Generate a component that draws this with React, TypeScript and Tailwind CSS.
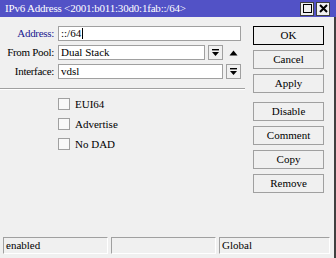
import React from "react";

function DropIcon() {
  return (
    <svg width="9" height="9" viewBox="0 0 9 9">
      <rect x="1" y="1" width="7" height="1.4" fill="#000" />
      <polygon points="1,4 8,4 4.5,8" fill="#000" />
    </svg>
  );
}

function DropBtn() {
  return (
    <div className="w-[15px] h-[15px] border border-[#a0a0a0] bg-[#f0f0f0] flex items-center justify-center">
      <DropIcon />
    </div>
  );
}

function Check({ label }: { label: string }) {
  return (
    <div className="flex items-center h-[12px]">
      <div className="w-[12px] h-[12px] border border-[#a0a0a0] bg-[#f8f8f8]" />
      <span className="ml-[5px] text-[11px] leading-none text-black">{label}</span>
    </div>
  );
}

function Btn({ label, def }: { label: string; def?: boolean }) {
  return (
    <div
      className={
        "w-[71px] h-[19px] flex items-center justify-center text-[11px] text-black bg-[#f0f0f0] " +
        (def ? "border border-black" : "border border-[#a0a0a0]")
      }
    >
      {label}
    </div>
  );
}

export default function App() {
  return (
    <div
      className="w-[336px] h-[258px] bg-[#f0f0f0] flex flex-col overflow-hidden relative"
      style={{ fontFamily: "'Liberation Serif', 'DejaVu Serif', serif" }}
    >
      {/* Title bar */}
      <div className="h-[17px] bg-[#5252c6] flex items-center justify-between pl-[5px] pr-[6px] shrink-0">
        <span className="text-white text-[11px] leading-none tracking-[-0.2px]">
          IPv6 Address &lt;2001:b011:30d0:1fab::/64&gt;
        </span>
        <div className="flex gap-[2px]">
          <div className="w-[14px] h-[14px] bg-[#f0f0f0] border border-[#404040] flex items-center justify-center">
            <div className="w-[9px] h-[9px] border-[1.5px] border-black" />
          </div>
          <div className="w-[14px] h-[14px] bg-[#f0f0f0] border border-[#404040] flex items-center justify-center">
            <svg width="9" height="9" viewBox="0 0 9 9">
              <path d="M1 1 L8 8 M8 1 L1 8" stroke="#000" strokeWidth="2" />
            </svg>
          </div>
        </div>
      </div>

      {/* Body */}
      <div className="flex flex-1 border-r-2 border-[#404040]">
        <div className="w-[253px] flex flex-col pt-[9px]">
          <div className="flex flex-col gap-[4px]">
            <div className="flex items-center h-[15px]">
              <span className="w-[54px] text-right text-[11px] text-[#1a1a90] tracking-[-0.3px]">Address:</span>
              <div className="ml-[4px] w-[183px] h-[15px] bg-white border border-[#a0a0a0] flex items-center pl-[2px] text-[11px] leading-none">
                ::/64<span className="w-px h-[11px] bg-black ml-px" />
              </div>
            </div>
            <div className="flex items-center h-[15px]">
              <span className="w-[54px] text-right text-[11px] text-black tracking-[-0.3px] whitespace-nowrap">From Pool:</span>
              <div className="ml-[4px] w-[147px] h-[15px] bg-white border border-[#a0a0a0] flex items-center pl-[2px] text-[11px] leading-none">
                Dual Stack
              </div>
              <div className="ml-[3px]"><DropBtn /></div>
              <svg width="9" height="6" viewBox="0 0 9 6" className="ml-[6px]">
                <polygon points="0.5,5.5 8.5,5.5 4.5,0.5" fill="#000" />
              </svg>
            </div>
            <div className="flex items-center h-[15px]">
              <span className="w-[54px] text-right text-[11px] text-black tracking-[-0.3px]">Interface:</span>
              <div className="ml-[4px] w-[165px] h-[15px] bg-white border border-[#a0a0a0] flex items-center pl-[2px] text-[11px] leading-none">
                vdsl
              </div>
              <div className="ml-[3px]"><DropBtn /></div>
            </div>
          </div>
          <div className="mt-[9px] w-[245px] border-t border-[#a0a0a0] border-b border-b-white" />
          <div className="flex flex-col gap-[8px] pl-[58px] pt-[8px]">
            <Check label="EUI64" />
            <Check label="Advertise" />
            <Check label="No DAD" />
          </div>
        </div>
        <div className="flex flex-col pt-[9px] gap-[5px]">
          <Btn label="OK" def />
          <Btn label="Cancel" />
          <Btn label="Apply" />
          <div className="h-[4px]" />
          <div className="-mt-[5px] flex flex-col gap-[5px]">
            <Btn label="Disable" />
            <Btn label="Comment" />
            <Btn label="Copy" />
            <Btn label="Remove" />
          </div>
        </div>
      </div>

      {/* Status bar */}
      <div className="h-[21px] shrink-0 flex gap-[3px] pl-[3px] pt-0 border-r-2 border-[#404040]">
        {["enabled", "", "Global"].map((t, i) => (
          <div
            key={i}
            className={
              "h-[17px] border-t border-l border-[#a0a0a0] border-b border-r border-b-white border-r-white flex items-center pl-[2px] text-[11px] text-black " +
              (i === 2 ? "w-[111px]" : "w-[105px]")
            }
          >
            {t}
          </div>
        ))}
      </div>
    </div>
  );
}
